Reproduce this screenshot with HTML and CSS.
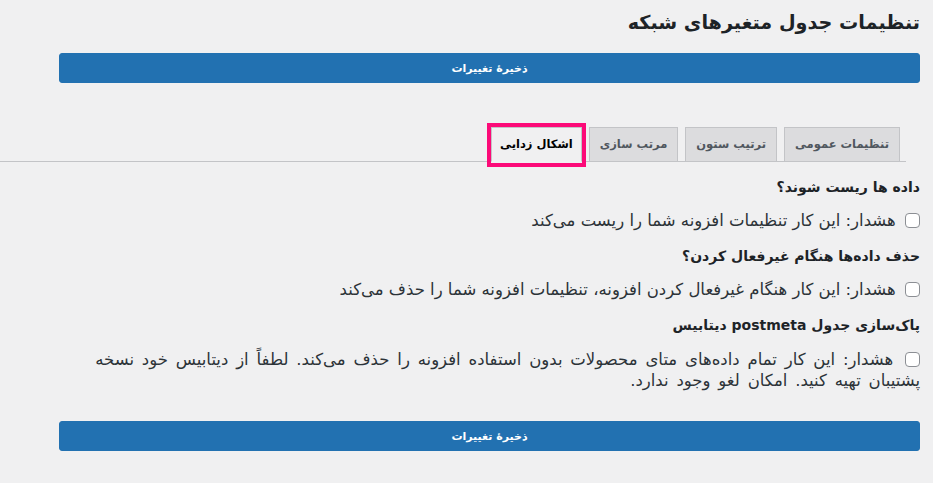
FILE: index.html
```html
<!DOCTYPE html>
<html lang="fa" dir="rtl">
<head>
<meta charset="utf-8">
<title>تنظیمات جدول متغیرهای شبکه</title>
<link rel="stylesheet" href="styles.css">
</head>
<body>
<div class="wrap">
  <h1 class="page-title">تنظیمات جدول متغیرهای شبکه</h1>
  <button class="save-btn" type="button">ذخیرهٔ تغییرات</button>

  <nav class="tabs">
    <a class="tab">تنظیمات عمومی</a>
    <a class="tab">ترتیب ستون</a>
    <a class="tab">مرتب سازی</a>
    <a class="tab tab-active">اشکال زدایی</a>
  </nav>

  <div class="content">
    <h3 class="opt-title">داده ها ریست شوند؟</h3>
    <p class="opt-row"><input type="checkbox" class="cb"> هشدار: این کار تنظیمات افزونه شما را ریست می‌کند</p>

    <h3 class="opt-title">حذف داده‌ها هنگام غیرفعال کردن؟</h3>
    <p class="opt-row"><input type="checkbox" class="cb"> هشدار: این کار هنگام غیرفعال کردن افزونه، تنظیمات افزونه شما را حذف می‌کند</p>

    <h3 class="opt-title">پاک‌سازی جدول postmeta دیتابیس</h3>
    <p class="opt-row opt-row-long"><input type="checkbox" class="cb"> هشدار: این کار تمام داده‌های متای محصولات بدون استفاده افزونه را حذف می‌کند. لطفاً از دیتابیس خود نسخه پشتیبان تهیه کنید. امکان لغو وجود ندارد.</p>
  </div>

  <button class="save-btn save-bottom" type="button">ذخیرهٔ تغییرات</button>
</div>
</body>
</html>
```

FILE: styles.css
```css
html, body {
  margin: 0;
  padding: 0;
  background: #f0f0f1;
}
body {
  direction: rtl;
  font-family: "DejaVu Sans", "Noto Sans", sans-serif;
  color: #1d2327;
}
.wrap {
  padding: 9px 13px 0 0;
}
.page-title {
  margin: 0;
  font-size: 19.2px;
  line-height: 28px;
  font-weight: 700;
  color: #1d2327;
}
.save-btn {
  display: block;
  box-sizing: border-box;
  width: calc(100% - 59px);
  margin: 16px 0 0 59px;
  height: 30px;
  border: 1px solid #2271b1;
  border-radius: 3px;
  background: #2271b1;
  color: #fff;
  font-family: inherit;
  font-size: 11px;
  font-weight: 700;
  padding: 0;
  direction: rtl;
}
.tabs {
  display: flex;
  align-items: flex-end;
  gap: 7px;
  height: 35px;
  margin: 43px 14px 0 0;
  padding: 0 6px 0 0;
  border-bottom: 1px solid #c3c4c7;
}
.tab {
  position: relative;
  box-sizing: border-box;
  height: 35px;
  margin-bottom: -1px;
  padding: 0 10px;
  border: 1px solid #c3c4c7;
  background: #dcdcde;
  color: #50575e;
  font-size: 11.5px;
  font-weight: 700;
  line-height: 33px;
  text-align: center;
  white-space: nowrap;
}
.tab-active {
  padding: 0 8px;
  background: #f0f0f1;
  color: #000;
  border-bottom-color: #f0f0f1;
}
.tab-active::after {
  content: "";
  position: absolute;
  top: -5px;
  right: -5px;
  left: -5px;
  bottom: -6px;
  border: 4px solid #fc0a78;
}
.content {
  margin-left: 59px;
  padding-top: 13px;
}
.opt-title {
  margin: 0 0 12px 0;
  font-size: 14px;
  line-height: 24px;
  font-weight: 700;
  color: #1d2327;
}
.opt-row {
  margin: 0 0 13px 0;
  font-size: 16.5px;
  line-height: 20px;
  color: #2c3338;
}
.opt-row-long {
  word-spacing: 2.6px;
  line-height: 21px;
}
.cb {
  -webkit-appearance: none;
  appearance: none;
  box-sizing: border-box;
  width: 15px;
  height: 15px;
  margin: 0 0 0 4px;
  border: 1px solid #8c8f94;
  border-radius: 4px;
  background: #fff;
  vertical-align: -2px;
}
.save-bottom {
  margin-top: 30px;
}
```
